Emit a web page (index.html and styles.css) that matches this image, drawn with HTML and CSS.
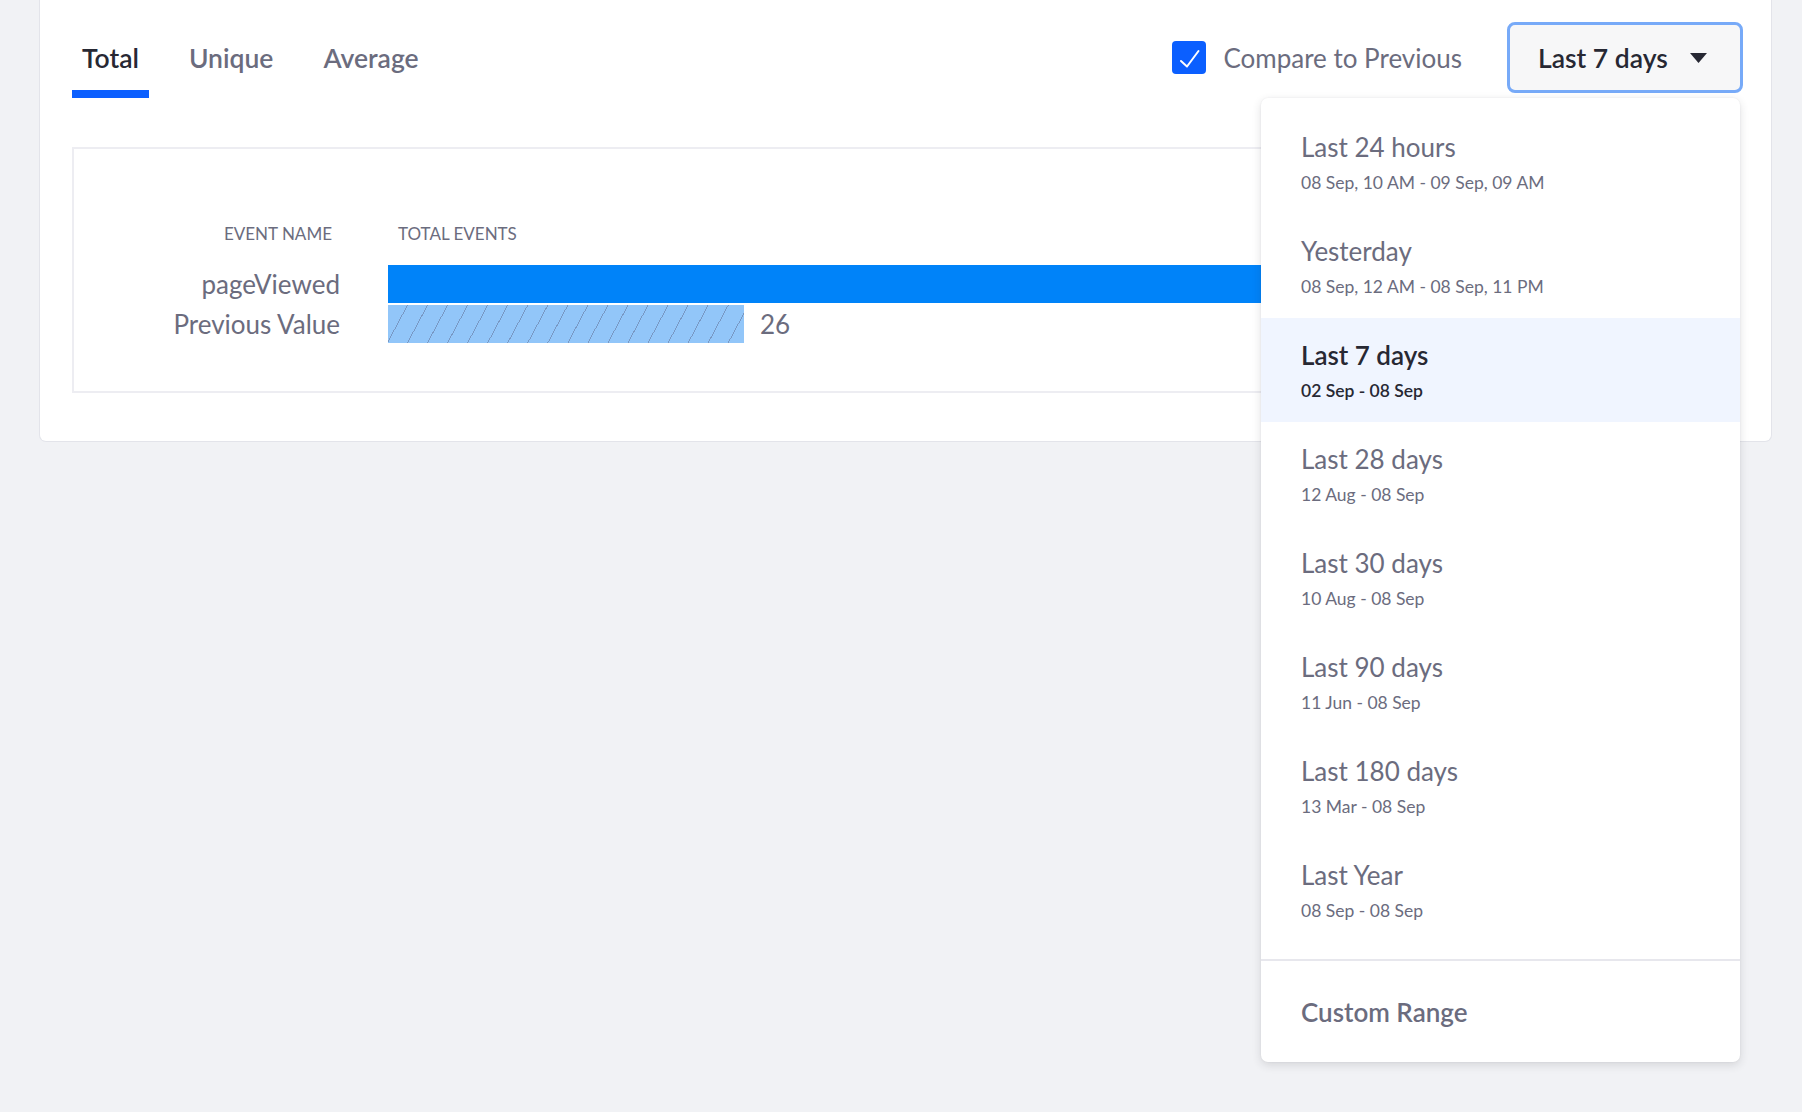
FILE: index.html
```html
<!DOCTYPE html>
<html lang="en">
<head>
<meta charset="utf-8">
<title>Events</title>
<link rel="stylesheet" href="styles.css">
</head>
<body>
<div class="card">
  <div class="header">
    <nav class="tabs">
      <div class="tab active">Total</div>
      <div class="tab">Unique</div>
      <div class="tab">Average</div>
    </nav>
    <div class="controls">
      <label class="compare">
        <span class="checkbox">
          <svg width="34" height="33" viewBox="0 0 34 33"><polyline points="9,20 15,25.5 26.5,10" fill="none" stroke="#fff" stroke-width="2" stroke-linecap="round" stroke-linejoin="round"/></svg>
        </span>
        <span class="compare-text">Compare to Previous</span>
      </label>
      <div class="picker">
        <button class="range-btn">
          <span>Last 7 days</span>
          <svg class="caret" width="17" height="10" viewBox="0 0 17 10"><polygon points="0,0 17,0 8.5,10" fill="#272833"/></svg>
        </button>
        <div class="dropdown">
          <ul class="options">
            <li class="option"><div class="opt-title">Last 24 hours</div><div class="opt-sub">08 Sep, 10 AM - 09 Sep, 09 AM</div></li>
            <li class="option"><div class="opt-title">Yesterday</div><div class="opt-sub">08 Sep, 12 AM - 08 Sep, 11 PM</div></li>
            <li class="option selected"><div class="opt-title">Last 7 days</div><div class="opt-sub">02 Sep - 08 Sep</div></li>
            <li class="option"><div class="opt-title">Last 28 days</div><div class="opt-sub">12 Aug - 08 Sep</div></li>
            <li class="option"><div class="opt-title">Last 30 days</div><div class="opt-sub">10 Aug - 08 Sep</div></li>
            <li class="option"><div class="opt-title">Last 90 days</div><div class="opt-sub">11 Jun - 08 Sep</div></li>
            <li class="option"><div class="opt-title">Last 180 days</div><div class="opt-sub">13 Mar - 08 Sep</div></li>
            <li class="option"><div class="opt-title">Last Year</div><div class="opt-sub">08 Sep - 08 Sep</div></li>
          </ul>
          <div class="custom">Custom Range</div>
        </div>
      </div>
    </div>
  </div>
  <div class="chart">
    <div class="col-head name-head">EVENT NAME</div>
    <div class="col-head total-head">TOTAL EVENTS</div>
    <div class="label">pageViewed</div>
    <div class="bar-cell"><div class="bar current" style="width:1000px"></div></div>
    <div class="label">Previous Value</div>
    <div class="bar-cell"><div class="bar previous" style="width:356px"></div><span class="value">26</span></div>
  </div>
</div>
</body>
</html>
```

FILE: styles.css
```css
* { box-sizing: border-box; }
html, body { margin: 0; padding: 0; }
body {
  background: #f1f2f5;
  font-family: Lato, "Open Sans", sans-serif;
  color: #6b6c7e;
  width: 1802px;
  height: 1112px;
  overflow: hidden;
}
.card {
  margin: 0 30px 0 39px;
  background: #fff;
  border: 1px solid #e3e4ea;
  border-top: none;
  border-radius: 0 0 7px 7px;
  padding: 0 28px 47px 32px;
  height: 442px;
}
.header {
  display: flex;
  justify-content: space-between;
  align-items: flex-start;
  height: 98px;
}
.tabs {
  display: flex;
  gap: 30px;
}
.tab {
  font-size: 26.5px;
  font-weight: 600;
  line-height: 32px;
  padding: 42px 10px 16px;
  border-bottom: 8px solid transparent;
  color: #6b6c7e;
}
.tab.active {
  color: #272833;
  border-bottom-color: #0b5fff;
}
.controls {
  display: flex;
  align-items: center;
  margin-top: 22px;
}
.compare {
  display: flex;
  align-items: center;
  gap: 17px;
  margin-right: 45px;
}
.checkbox {
  width: 34px;
  height: 33px;
  background: #0b5fff;
  border-radius: 4px;
  display: block;
}
.checkbox svg { display: block; }
.compare-text {
  font-size: 26px;
  line-height: 32px;
  color: #6b6c7e;
}
.picker { position: relative; }
.range-btn {
  display: flex;
  align-items: center;
  width: 236px;
  height: 71px;
  padding: 0 0 0 28px;
  background: #f7f7f8;
  border: 3px solid #77aaf8;
  border-radius: 8px;
  font-family: inherit;
  font-size: 26.5px;
  font-weight: 600;
  color: #272833;
}
.caret { margin-left: 22px; }
.dropdown {
  position: absolute;
  top: 76px;
  right: 3px;
  width: 479px;
  background: #fff;
  border-radius: 7px;
  box-shadow: 0 3px 10px rgba(39, 40, 51, 0.14), 0 0 2px rgba(39, 40, 51, 0.08);
  z-index: 10;
}
.options {
  list-style: none;
  margin: 0;
  padding: 12px 0 17px;
}
.option {
  height: 104px;
  padding: 21px 40px 19px;
}
.opt-title {
  font-size: 26px;
  line-height: 32px;
  color: #6b6c7e;
}
.opt-sub {
  margin-top: 8px;
  font-size: 17.5px;
  line-height: 24px;
  color: #6b6c7e;
}
.option.selected { background: #f0f5ff; }
.option.selected .opt-title,
.option.selected .opt-sub { color: #272833; font-weight: 600; }
.custom {
  border-top: 2px solid #e7e7ed;
  padding: 35px 40px 34px;
  font-size: 26px;
  line-height: 32px;
  font-weight: 600;
  color: #6b6c7e;
}
.chart {
  margin-top: 49px;
  margin-right: 8px;
  height: 246px;
  border: 2px solid #ededf2;
  padding: 73px 0 48px;
  display: grid;
  grid-template-columns: 266px 1fr;
  grid-template-rows: 43px 40px 38px;
  column-gap: 48px;
}
.col-head {
  font-size: 17px;
  line-height: 24px;
  color: #6b6c7e;
}
.name-head { text-align: right; padding-right: 8px; }
.total-head { padding-left: 10px; }
.label {
  font-size: 26px;
  line-height: 38px;
  text-align: right;
}
.bar-cell {
  display: flex;
  align-items: flex-start;
}
.bar { height: 38px; }
.bar.current { background: #0083f9; }
.bar.previous {
  background-color: #92c6f9;
  background-image: repeating-linear-gradient(118deg, transparent 0, transparent 16.8px, #7898c4 16.8px, #7898c4 17.7px);
}
.value {
  margin-left: 16px;
  font-size: 26px;
  line-height: 38px;
}
```
